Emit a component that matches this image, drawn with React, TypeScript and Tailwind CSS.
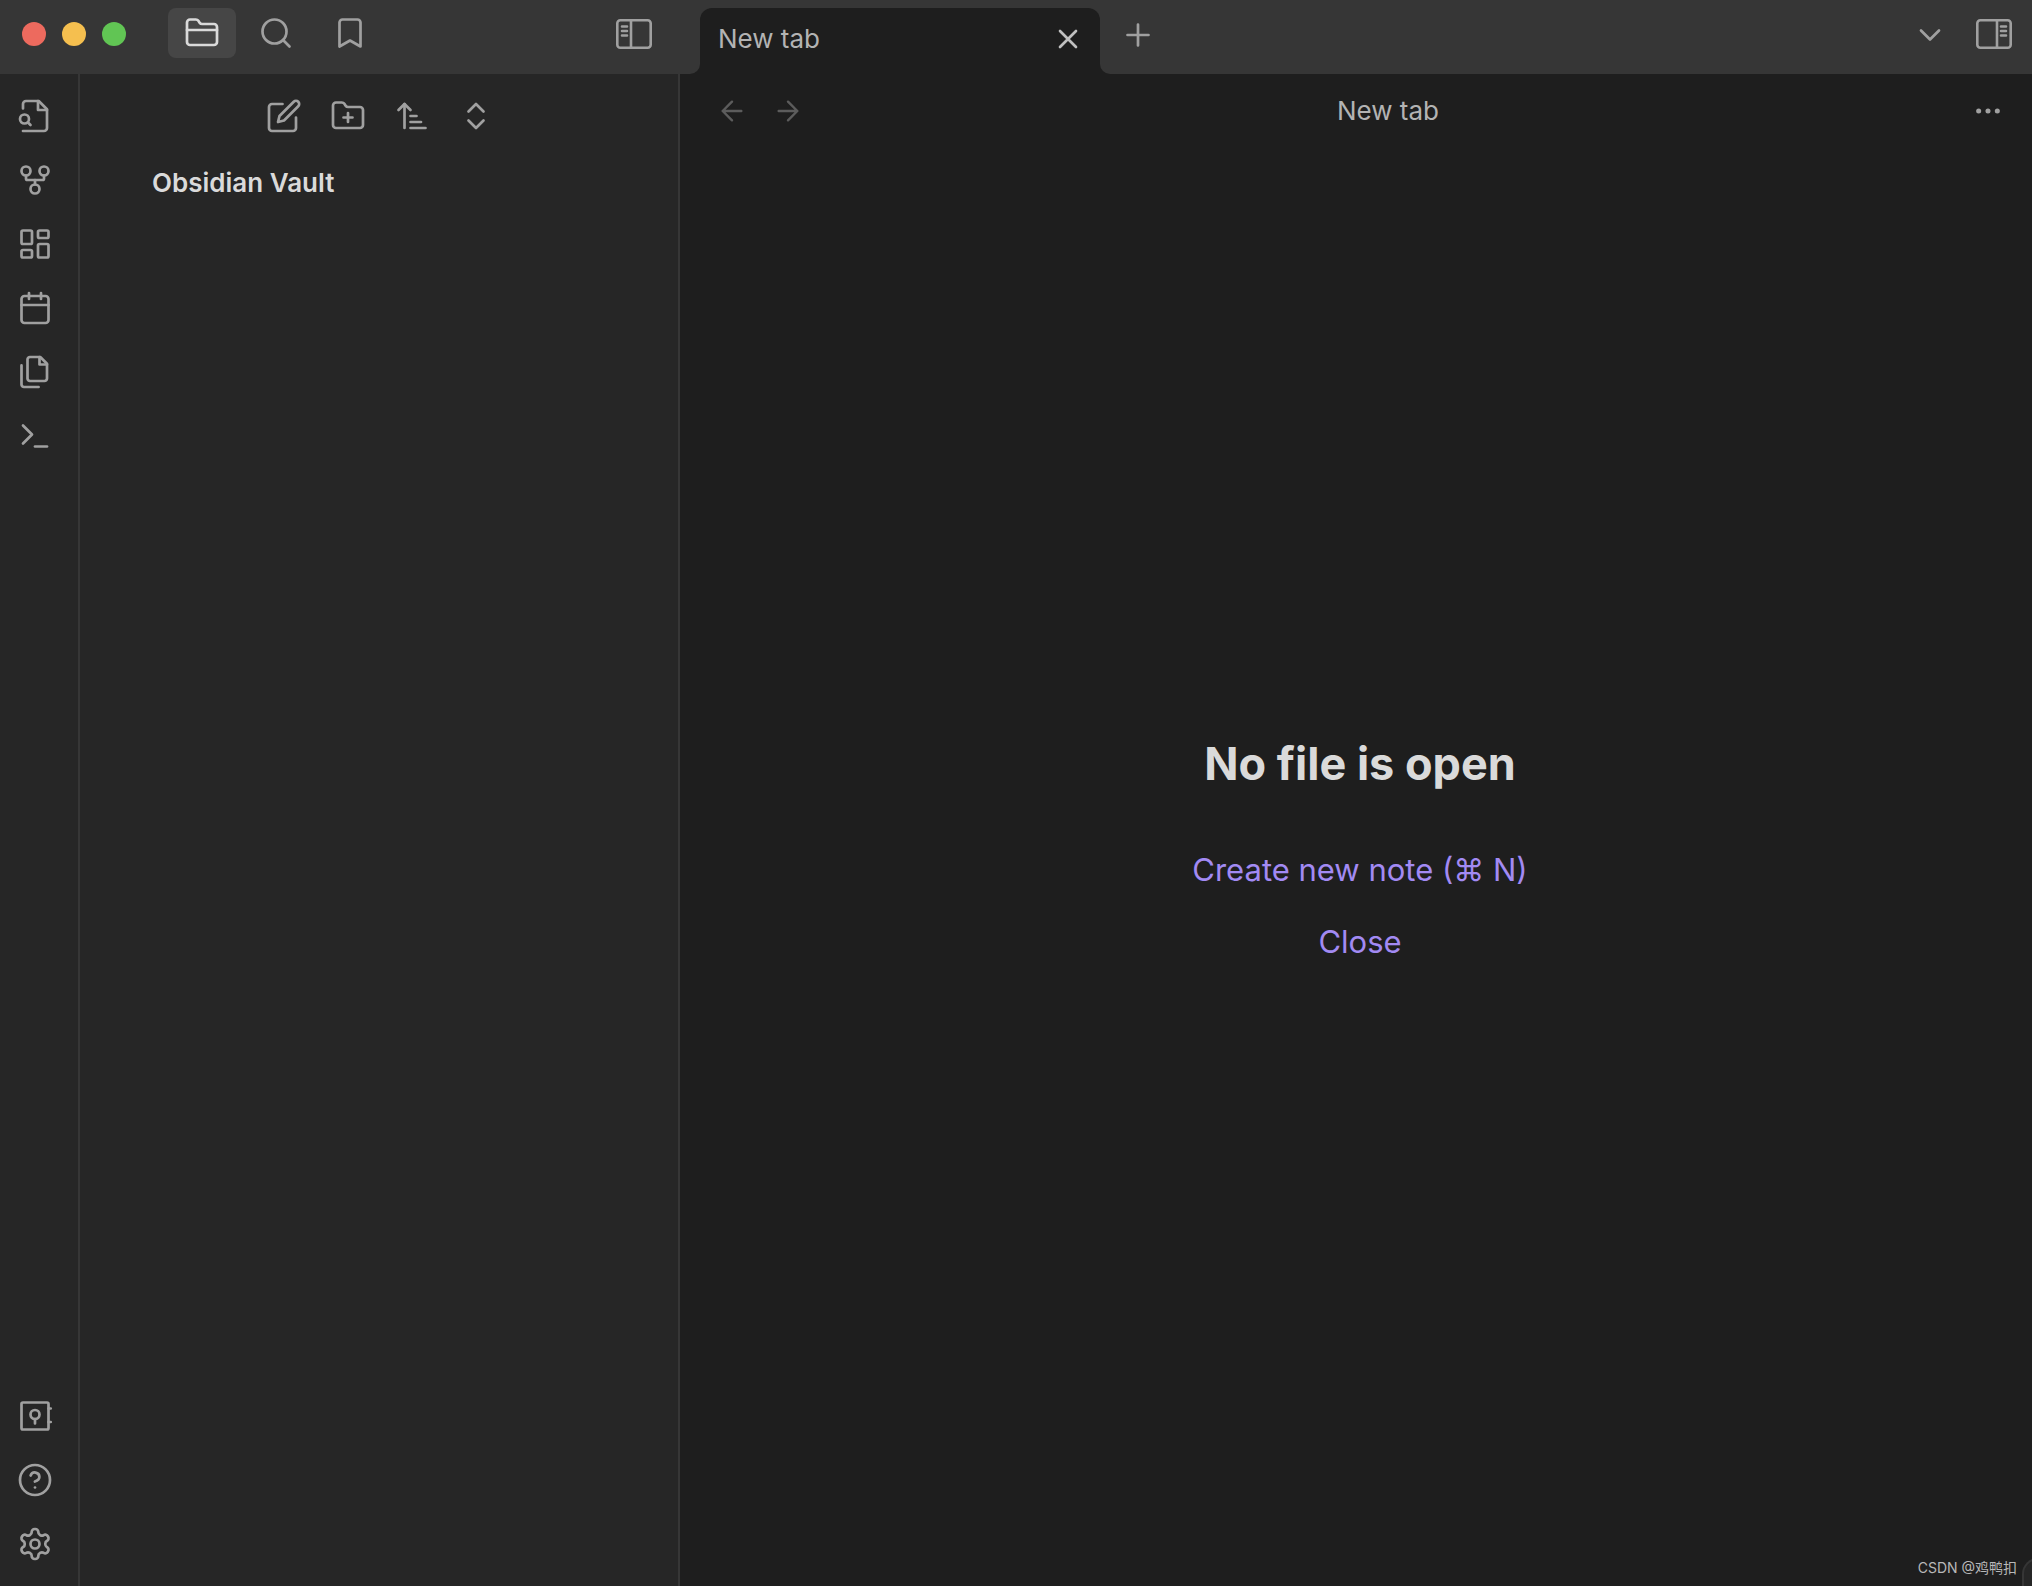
import React from "react";

type IconProps = { size?: "sm" | "md"; children: React.ReactNode; className?: string };

function Icon({ size = "md", children, className = "" }: IconProps) {
  return (
    <svg
      viewBox="0 0 24 24"
      fill="none"
      stroke="currentColor"
      strokeLinecap="round"
      strokeLinejoin="round"
      aria-hidden="true"
      className={`${size === "md" ? "size-9" : "size-8"} shrink-0 ${className || "stroke-[1.8]"}`}
    >
      {children}
    </svg>
  );
}

type IconButtonProps = { label: string; className?: string; children: React.ReactNode };

function IconButton({ label, className = "", children }: IconButtonProps) {
  return (
    <button type="button" aria-label={label} className={`flex shrink-0 items-center justify-center ${className}`}>
      {children}
    </button>
  );
}

function SidebarToggleIcon({ flipped = false }: { flipped?: boolean }) {
  return (
    <svg
      viewBox="0 0 36 30"
      fill="none"
      stroke="currentColor"
      strokeWidth="2.6"
      aria-hidden="true"
      className={`h-[30px] w-9 shrink-0 ${flipped ? "-scale-x-100" : ""}`}
    >
      <rect x="1.3" y="1.3" width="33.4" height="27.4" rx="3" />
      <path d="M15 1v28" />
      <path d="M6 7.5h5M6 12h5M6 16.5h5" strokeLinecap="round" />
    </svg>
  );
}

const ribbonTop = [
  {
    label: "Open quick switcher",
    icon: (
      <>
        <path d="M4 22h14a2 2 0 0 0 2-2V7.5L14.5 2H6a2 2 0 0 0-2 2v3" />
        <path d="M14 2v6h6" />
        <circle cx="5" cy="14" r="3" />
        <path d="m9 18-1.5-1.5" />
      </>
    ),
  },
  {
    label: "Open graph view",
    icon: (
      <>
        <circle cx="12" cy="18" r="3" />
        <circle cx="6" cy="6" r="3" />
        <circle cx="18" cy="6" r="3" />
        <path d="M18 9v2c0 .6-.4 1-1 1H7c-.6 0-1-.4-1-1V9" />
        <path d="M12 12v3" />
      </>
    ),
  },
  {
    label: "Create new canvas",
    icon: (
      <>
        <rect x="3" y="3" width="7" height="9" rx="1" />
        <rect x="14" y="3" width="7" height="5" rx="1" />
        <rect x="14" y="12" width="7" height="9" rx="1" />
        <rect x="3" y="16" width="7" height="5" rx="1" />
      </>
    ),
  },
  {
    label: "Open today's daily note",
    icon: (
      <>
        <rect x="3" y="4" width="18" height="18" rx="2" />
        <path d="M16 2v4M8 2v4M3 10h18" />
      </>
    ),
  },
  {
    label: "Insert template",
    icon: (
      <>
        <path d="M15.5 2H8.6c-.4 0-.8.2-1.1.5-.3.3-.5.7-.5 1.1v12.8c0 .4.2.8.5 1.1.3.3.7.5 1.1.5h9.8c.4 0 .8-.2 1.1-.5.3-.3.5-.7.5-1.1V6.5L15.5 2z" />
        <path d="M3 7.6v12.8c0 .4.2.8.5 1.1.3.3.7.5 1.1.5h9.8" />
        <path d="M15 2v5h5" />
      </>
    ),
  },
  {
    label: "Open command palette",
    icon: (
      <>
        <path d="m4 17 6-6-6-6" />
        <path d="M12 19h8" />
      </>
    ),
  },
];

const ribbonBottom = [
  {
    label: "Open another vault",
    icon: (
      <>
        <rect x="3" y="3" width="18" height="18" rx="1" />
        <circle cx="12" cy="11" r="3" />
        <path d="M12 14v3M21 7h1.5M21 16h1.5" />
      </>
    ),
  },
  {
    label: "Help",
    icon: (
      <>
        <circle cx="12" cy="12" r="10" />
        <path d="M9.09 9a3 3 0 0 1 5.83 1c0 2-3 3-3 3" />
        <path d="M12 17h.01" />
      </>
    ),
  },
  {
    label: "Settings",
    icon: (
      <>
        <path d="M12.22 2h-.44a2 2 0 0 0-2 2v.18a2 2 0 0 1-1 1.73l-.43.25a2 2 0 0 1-2 0l-.15-.08a2 2 0 0 0-2.73.73l-.22.38a2 2 0 0 0 .73 2.73l.15.1a2 2 0 0 1 1 1.72v.51a2 2 0 0 1-1 1.74l-.15.09a2 2 0 0 0-.73 2.73l.22.38a2 2 0 0 0 2.73.73l.15-.08a2 2 0 0 1 2 0l.43.25a2 2 0 0 1 1 1.73V20a2 2 0 0 0 2 2h.44a2 2 0 0 0 2-2v-.18a2 2 0 0 1 1-1.73l.43-.25a2 2 0 0 1 2 0l.15.08a2 2 0 0 0 2.73-.73l.22-.39a2 2 0 0 0-.73-2.73l-.15-.08a2 2 0 0 1-1-1.74v-.5a2 2 0 0 1 1-1.74l.15-.09a2 2 0 0 0 .73-2.73l-.22-.38a2 2 0 0 0-2.73-.73l-.15.08a2 2 0 0 1-2 0l-.43-.25a2 2 0 0 1-1-1.73V4a2 2 0 0 0-2-2z" />
        <circle cx="12" cy="12" r="3" />
      </>
    ),
  },
];

const fileActions = [
  {
    label: "New note",
    icon: (
      <>
        <path d="M11 4H4a2 2 0 0 0-2 2v14a2 2 0 0 0 2 2h14a2 2 0 0 0 2-2v-7" />
        <path d="M18.5 2.5a2.12 2.12 0 0 1 3 3L12 15l-4 1 1-4Z" />
      </>
    ),
  },
  {
    label: "New folder",
    icon: (
      <>
        <path d="M4 20h16a2 2 0 0 0 2-2V8a2 2 0 0 0-2-2h-7.93a2 2 0 0 1-1.66-.9l-.82-1.2A2 2 0 0 0 7.93 3H4a2 2 0 0 0-2 2v13c0 1.1.9 2 2 2Z" />
        <path d="M12 10v6M9 13h6" />
      </>
    ),
  },
  {
    label: "Change sort order",
    icon: (
      <>
        <path d="m3 8 4-4 4 4" />
        <path d="M7 4v16M11 12h4M11 16h7M11 20h10" />
      </>
    ),
  },
  {
    label: "Expand all",
    icon: (
      <>
        <path d="m7 15 5 5 5-5" />
        <path d="m7 9 5-5 5 5" />
      </>
    ),
  },
];

function TrafficLights() {
  return (
    <div className="flex gap-4">
      <button type="button" aria-label="Close window" className="size-6 rounded-full bg-[#ed6a5e]" />
      <button type="button" aria-label="Minimize window" className="size-6 rounded-full bg-[#f5bf4f]" />
      <button type="button" aria-label="Zoom window" className="size-6 rounded-full bg-[#61c554]" />
    </div>
  );
}

function TitleBar() {
  return (
    <header className="flex h-[74px] shrink-0 bg-[#363636] text-[#a0a0a0]">
      <div className="flex w-[680px] shrink-0 items-center pr-7 pb-[6px] pl-[22px]">
        <TrafficLights />
        <nav aria-label="Sidebar views" className="ml-[42px] flex gap-[6px] pb-0.5">
          <IconButton label="Files" className="h-[50px] w-[68px] rounded-lg bg-[#464646] text-[#dadada]">
            <Icon>
              <path d="M4 20h16a2 2 0 0 0 2-2V8a2 2 0 0 0-2-2h-7.93a2 2 0 0 1-1.66-.9l-.82-1.2A2 2 0 0 0 7.93 3H4a2 2 0 0 0-2 2v13c0 1.1.9 2 2 2Z" />
              <path d="M2 10h20" />
            </Icon>
          </IconButton>
          <IconButton label="Search" className="h-[50px] w-[68px]">
            <Icon>
              <circle cx="11" cy="11" r="8" />
              <path d="m21 21-4.3-4.3" />
            </Icon>
          </IconButton>
          <IconButton label="Bookmarks" className="h-[50px] w-[68px]">
            <Icon>
              <path d="m19 21-7-4-7 4V5a2 2 0 0 1 2-2h10a2 2 0 0 1 2 2v16z" />
            </Icon>
          </IconButton>
        </nav>
        <IconButton label="Collapse left sidebar" className="ml-auto">
          <SidebarToggleIcon />
        </IconButton>
      </div>

      <div className="flex min-w-0 flex-1 items-start">
        <div role="tablist" className="flex h-full w-[432px] items-end">
          <div className="h-3 w-5 bg-[#1e1e1e]">
            <div className="size-full rounded-br-[10px] bg-[#363636]" />
          </div>
          <div className="flex h-[66px] flex-1 items-center rounded-t-xl bg-[#1e1e1e] pr-4 pb-1 pl-[18px] text-[#b3b3b3]">
            <button type="button" role="tab" aria-selected="true" className="flex-1 text-left text-[26px] leading-8">
              New tab
            </button>
            <IconButton label="Close tab">
              <Icon size="sm" className="stroke-2 text-[#c0c0c0]">
                <path d="M18 6 6 18M6 6l12 12" />
              </Icon>
            </IconButton>
          </div>
          <div className="h-3 w-3 bg-[#1e1e1e]">
            <div className="size-full rounded-bl-[10px] bg-[#363636]" />
          </div>
        </div>
        <IconButton label="New tab" className="ml-2 h-[70px] w-9">
          <Icon>
            <path d="M12 5v14M5 12h14" />
          </Icon>
        </IconButton>
        <div className="ml-auto flex pr-5">
          <IconButton label="Tab list" className="mr-7 h-[70px]">
            <Icon>
              <path d="m6 9 6 6 6-6" />
            </Icon>
          </IconButton>
          <IconButton label="Collapse right sidebar" className="h-[68px]">
            <SidebarToggleIcon flipped />
          </IconButton>
        </div>
      </div>
    </header>
  );
}

function Ribbon() {
  return (
    <nav
      aria-label="Ribbon"
      className="flex w-20 shrink-0 flex-col justify-between border-r-2 border-[#363636] pt-6 pb-6 pl-[17px] text-[#a0a0a0]"
    >
      <div className="flex flex-col gap-7">
        {ribbonTop.map((item) => (
          <IconButton key={item.label} label={item.label} className="size-9">
            <Icon>{item.icon}</Icon>
          </IconButton>
        ))}
      </div>
      <div className="flex flex-col gap-7">
        {ribbonBottom.map((item) => (
          <IconButton key={item.label} label={item.label} className="size-9">
            <Icon>{item.icon}</Icon>
          </IconButton>
        ))}
      </div>
    </nav>
  );
}

function FileExplorer() {
  return (
    <aside className="w-[600px] shrink-0 border-r-2 border-[#363636] pt-6">
      <div className="flex justify-center gap-7 pl-0.5 text-[#a0a0a0]">
        {fileActions.map((action) => (
          <IconButton key={action.label} label={action.label} className="size-9">
            <Icon>{action.icon}</Icon>
          </IconButton>
        ))}
      </div>
      <h1 className="mt-8 pl-[72px] text-[26px] leading-[34px] font-semibold text-[#dadada]">Obsidian Vault</h1>
    </aside>
  );
}

function Workspace() {
  return (
    <main className="relative flex min-w-0 flex-1 flex-col bg-[#1e1e1e]">
      <div className="flex h-[74px] shrink-0 items-center pr-7 pl-9 text-[#a0a0a0]">
        <div className="flex gap-6 text-[#5c5c5c]">
          <IconButton label="Back">
            <Icon size="sm">
              <path d="m12 19-7-7 7-7M19 12H5" />
            </Icon>
          </IconButton>
          <IconButton label="Forward">
            <Icon size="sm">
              <path d="M5 12h14M12 5l7 7-7 7" />
            </Icon>
          </IconButton>
        </div>
        <div className="flex-1 text-center text-[26px] leading-8 text-[#b3b3b3]">New tab</div>
        <IconButton label="More options">
          <Icon size="sm">
            <circle cx="12" cy="12" r="1" fill="currentColor" />
            <circle cx="19" cy="12" r="1" fill="currentColor" />
            <circle cx="5" cy="12" r="1" fill="currentColor" />
          </Icon>
        </IconButton>
      </div>
      <div className="flex flex-1 flex-col items-center justify-center pb-8 pl-2 text-center">
        <h2 className="text-[45px] leading-[48px] font-bold text-[#dadada]">No file is open</h2>
        <button type="button" className="mt-[62px] text-[31px] leading-10 text-[#a28af3]">
          Create new note (⌘ N)
        </button>
        <button type="button" className="mt-8 text-[31px] leading-10 text-[#a28af3]">
          Close
        </button>
      </div>
      <div className="absolute right-0 bottom-0 flex items-end gap-[5px] overflow-hidden">
        <span className="pb-2 text-sm leading-5 text-[#b8b8b8]">CSDN @鸡鸭扣</span>
        <span className="-mr-[14px] h-7 w-6 rounded-tl-2xl border-t-2 border-l-2 border-[#363636] bg-[#262626]" />
      </div>
    </main>
  );
}

export default function App() {
  return (
    <div className="flex h-screen flex-col bg-[#262626] font-['Inter','Noto_Sans_CJK_SC',sans-serif] antialiased">
      <TitleBar />
      <div className="flex min-h-0 flex-1">
        <Ribbon />
        <FileExplorer />
        <Workspace />
      </div>
    </div>
  );
}
